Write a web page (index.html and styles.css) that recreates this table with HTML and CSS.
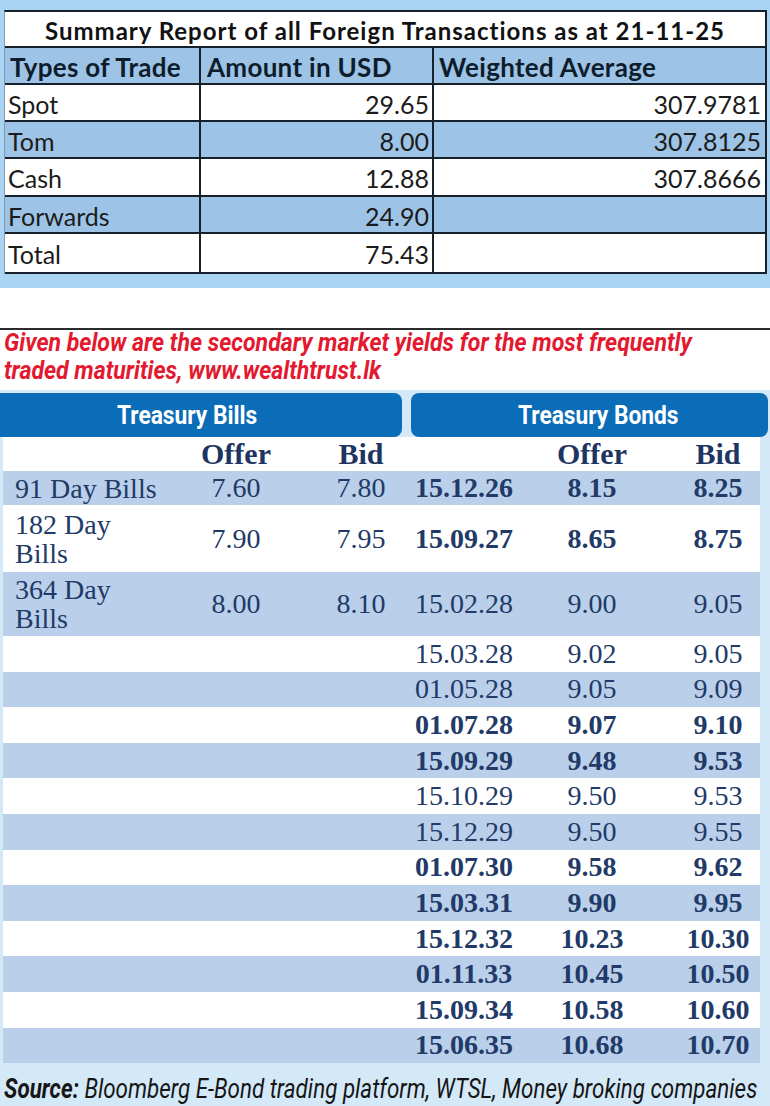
FILE: index.html
```html
<!DOCTYPE html>
<html>
<head>
<meta charset="utf-8">
<link rel="stylesheet" href="styles.css">
</head>
<body>
<div class="page">
  <section class="fx">
    <div class="fx-table">
      <div class="fx-title">Summary Report of all Foreign Transactions as at 21-11-25</div>
      <div class="c c1 head">Types of Trade</div>
      <div class="c c2 head head-amt">Amount in USD</div>
      <div class="c c3 head">Weighted Average</div>

      <div class="c c1">Spot</div>
      <div class="c c2 num">29.65</div>
      <div class="c c3 num">307.9781</div>

      <div class="c c1 blue">Tom</div>
      <div class="c c2 num blue">8.00</div>
      <div class="c c3 num blue">307.8125</div>

      <div class="c c1">Cash</div>
      <div class="c c2 num">12.88</div>
      <div class="c c3 num">307.8666</div>

      <div class="c c1 blue">Forwards</div>
      <div class="c c2 num blue">24.90</div>
      <div class="c c3 num blue"></div>

      <div class="c c1">Total</div>
      <div class="c c2 num">75.43</div>
      <div class="c c3 num"></div>
    </div>
  </section>

  <section class="note">
    <div class="rule"></div>
    <p class="note-text"><span class="squeeze">Given below are the secondary market yields for the most frequently<br>traded maturities, www.wealthtrust.lk</span></p>
  </section>

  <section class="yields">
    <div class="bars">
      <div class="bar bar-bills"><span class="bar-label">Treasury Bills</span></div>
      <div class="bar bar-bonds"><span class="bar-label">Treasury Bonds</span></div>
    </div>

    <div class="ytable">
      <div class="yrow yhead">
        <div></div><div class="ctr">Offer</div><div class="ctr bbid">Bid</div>
        <div></div><div class="ctr">Offer</div><div class="ctr bid">Bid</div>
      </div>

      <div class="yrow alt r34">
        <div class="lbl">91 Day Bills</div><div class="ctr">7.60</div><div class="ctr bbid">7.80</div>
        <div class="ctr b">15.12.26</div><div class="ctr b">8.15</div><div class="ctr bid b">8.25</div>
      </div>
      <div class="yrow r67">
        <div class="lbl">182 Day<br>Bills</div><div class="ctr">7.90</div><div class="ctr bbid">7.95</div>
        <div class="ctr b">15.09.27</div><div class="ctr b">8.65</div><div class="ctr bid b">8.75</div>
      </div>
      <div class="yrow alt r64">
        <div class="lbl">364 Day<br>Bills</div><div class="ctr">8.00</div><div class="ctr bbid">8.10</div>
        <div class="ctr">15.02.28</div><div class="ctr">9.00</div><div class="ctr bid">9.05</div>
      </div>

      <div class="yrow">
        <div></div><div></div><div></div>
        <div class="ctr">15.03.28</div><div class="ctr">9.02</div><div class="ctr bid">9.05</div>
      </div>
      <div class="yrow alt">
        <div></div><div></div><div></div>
        <div class="ctr">01.05.28</div><div class="ctr">9.05</div><div class="ctr bid">9.09</div>
      </div>
      <div class="yrow">
        <div></div><div></div><div></div>
        <div class="ctr b">01.07.28</div><div class="ctr b">9.07</div><div class="ctr bid b">9.10</div>
      </div>
      <div class="yrow alt">
        <div></div><div></div><div></div>
        <div class="ctr b">15.09.29</div><div class="ctr b">9.48</div><div class="ctr bid b">9.53</div>
      </div>
      <div class="yrow">
        <div></div><div></div><div></div>
        <div class="ctr">15.10.29</div><div class="ctr">9.50</div><div class="ctr bid">9.53</div>
      </div>
      <div class="yrow alt">
        <div></div><div></div><div></div>
        <div class="ctr">15.12.29</div><div class="ctr">9.50</div><div class="ctr bid">9.55</div>
      </div>
      <div class="yrow">
        <div></div><div></div><div></div>
        <div class="ctr b">01.07.30</div><div class="ctr b">9.58</div><div class="ctr bid b">9.62</div>
      </div>
      <div class="yrow alt">
        <div></div><div></div><div></div>
        <div class="ctr b">15.03.31</div><div class="ctr b">9.90</div><div class="ctr bid b">9.95</div>
      </div>
      <div class="yrow">
        <div></div><div></div><div></div>
        <div class="ctr b">15.12.32</div><div class="ctr b">10.23</div><div class="ctr bid b">10.30</div>
      </div>
      <div class="yrow alt">
        <div></div><div></div><div></div>
        <div class="ctr b">01.11.33</div><div class="ctr b">10.45</div><div class="ctr bid b">10.50</div>
      </div>
      <div class="yrow">
        <div></div><div></div><div></div>
        <div class="ctr b">15.09.34</div><div class="ctr b">10.58</div><div class="ctr bid b">10.60</div>
      </div>
      <div class="yrow alt">
        <div></div><div></div><div></div>
        <div class="ctr b">15.06.35</div><div class="ctr b">10.68</div><div class="ctr bid b">10.70</div>
      </div>
    </div>

    <p class="source"><span class="squeeze2"><b>Source:</b> Bloomberg E-Bond trading platform, WTSL, Money broking companies</span></p>
  </section>
</div>
</body>
</html>
```

FILE: styles.css
```css
* { box-sizing: border-box; }

html, body {
  margin: 0;
  padding: 0;
  background: #ffffff;
}

.page {
  width: 770px;
  overflow: hidden;
}

/* ---------- FX summary ---------- */
.fx {
  background: #a9d4f2;
  padding: 10px 3px 14px 4px;
}

.fx-table {
  display: grid;
  grid-template-columns: 196px 233px 331px;
  grid-template-rows: 36px 37px 37px 37px 38px 37px 40px;
  border-top: 2px solid #17212b;
  border-right: 2px solid #17212b;
  border-left: 1px solid #7e9ab6;
  font-family: Lato, "Open Sans", sans-serif;
  color: #1b1b1b;
}

.fx-title {
  grid-column: 1 / -1;
  background: #ffffff;
  border-bottom: 2px solid #17212b;
  display: flex;
  align-items: center;
  justify-content: center;
  font-weight: 700;
  font-size: 24px;
  letter-spacing: 1px;
  padding-top: 2px;
  color: #111111;
}

.c {
  display: flex;
  align-items: center;
  background: #ffffff;
  border-bottom: 2px solid #17212b;
  font-size: 25px;
  padding: 2px 4px 0 3px;
}

.c1, .c2 { border-right: 2px solid #17212b; }

.c.blue, .c.head { background: #9dc3e6; }

.c.head {
  font-weight: 700;
  font-size: 26px;
  letter-spacing: 0.3px;
  color: #0e1d2c;
  padding-left: 5px;
}

.c.head-amt { padding-left: 6px; }

.c.num { justify-content: flex-end; }
.c2.num { padding-right: 3px; }
.c3.num { padding-right: 4px; }

/* ---------- Note ---------- */
.note {
  height: 102px;
  padding-top: 40px;
}

.rule {
  border-top: 2px solid #2b2b2b;
}

.note-text {
  margin: -2px 0 0 4px;
  font-family: Roboto, "Liberation Sans", sans-serif;
  font-weight: 700;
  font-style: italic;
  font-size: 26px;
  line-height: 28px;
  color: #e2192f;
  white-space: nowrap;
}

.squeeze {
  display: inline-block;
  transform: scaleX(0.888);
  transform-origin: 0 0;
}

/* ---------- Yields ---------- */
.yields {
  background: #d4e9f8;
  padding-top: 3px;
  height: 716px;
}

.bars {
  display: flex;
  gap: 9px;
  height: 44px;
}

.bar {
  background: #0b6cb8;
  color: #ffffff;
  display: flex;
  align-items: center;
  justify-content: center;
  font-family: Roboto, "Liberation Sans", sans-serif;
  font-weight: 700;
  font-size: 25px;
}

.bar-bills {
  width: 402px;
  border-radius: 0 8px 8px 0;
  padding-right: 28px;
}

.bar-bonds {
  width: 357px;
  border-radius: 8px;
  padding-left: 18px;
}

.bar-label {
  display: inline-block;
  transform: scaleX(0.91);
}

.ytable {
  margin-left: 3px;
  width: 757px;
  font-family: "Liberation Serif", "Times New Roman", serif;
  font-size: 28px;
  color: #213a67;
}

.yrow {
  display: grid;
  grid-template-columns: 170px 126px 112px 106px 150px 93px;
  align-items: center;
  height: 35.6px;
  background: #ffffff;
}

.yrow.alt { background: #b9cfea; }

.yrow.yhead {
  height: 34px;
  font-weight: 700;
  font-size: 30px;
  color: #1f3561;
}

.yrow.r34 { height: 34px; }
.yrow.r67 { height: 67px; }
.yrow.r64 { height: 64px; }

.lbl {
  padding-left: 12px;
  line-height: 29px;
}

.ctr { text-align: center; }
.bbid { padding-left: 12px; }
.bid { padding-left: 9px; }
.b { font-weight: 700; }

.source {
  margin: 10px 0 0 4px;
  font-family: Roboto, "Liberation Sans", sans-serif;
  font-style: italic;
  font-size: 27px;
  line-height: 32px;
  color: #161616;
  white-space: nowrap;
}

.source b { font-weight: 700; }

.squeeze2 {
  display: inline-block;
  transform: scaleX(0.83);
  transform-origin: 0 0;
}
```
